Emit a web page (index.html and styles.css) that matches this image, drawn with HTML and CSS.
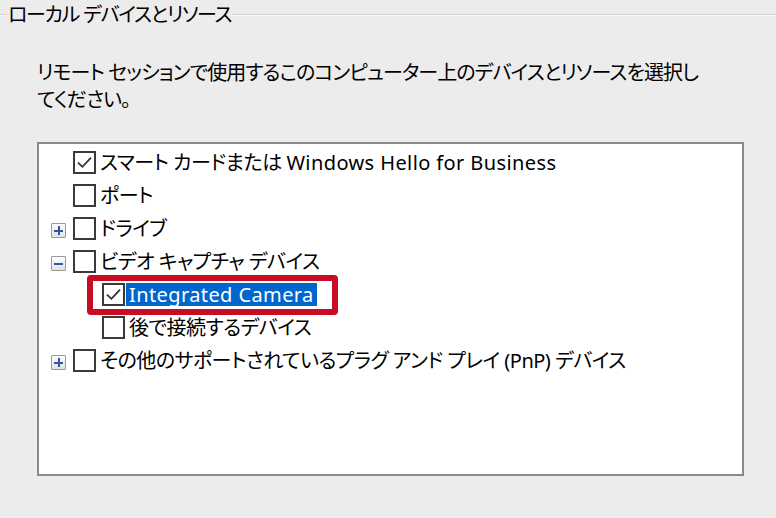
FILE: index.html
```html
<!DOCTYPE html>
<html lang="ja">
<head>
<meta charset="utf-8">
<title>ローカル デバイスとリソース</title>
<link rel="stylesheet" href="styles.css">
</head>
<body>
<div class="group-head">
  <span class="rule rule-start"></span>
  <span class="group-title">ローカル デバイスとリソース</span>
  <span class="rule rule-fill"></span>
</div>
<p class="desc">リモート セッションで使用するこのコンピューター上のデバイスとリソースを選択し<br>てください。</p>
<div class="tree">
  <div class="row">
    <span class="exp exp-none"></span>
    <span class="cb"><svg viewBox="0 0 19 19" width="19" height="19"><path d="M3 9.6 L7.4 13.8 L16 4.6" fill="none" stroke="#333" stroke-width="1.8"/></svg></span>
    <span class="label">スマート カードまたは <span class="latin">Windows Hello for Business</span></span>
  </div>
  <div class="row">
    <span class="exp exp-none"></span>
    <span class="cb"></span>
    <span class="label">ポート</span>
  </div>
  <div class="row">
    <span class="exp"><span class="bar-h"></span><span class="bar-v"></span></span>
    <span class="cb"></span>
    <span class="label">ドライブ</span>
  </div>
  <div class="row">
    <span class="exp"><span class="bar-h"></span></span>
    <span class="cb"></span>
    <span class="label">ビデオ キャプチャ デバイス</span>
  </div>
  <div class="row child marked">
    <span class="exp exp-none"></span>
    <span class="cb"><svg viewBox="0 0 19 19" width="19" height="19"><path d="M3 9.6 L7.4 13.8 L16 4.6" fill="none" stroke="#333" stroke-width="1.8"/></svg></span>
    <span class="label selected"><span class="latin">Integrated Camera</span></span>
    <span class="callout"></span>
  </div>
  <div class="row child">
    <span class="exp exp-none"></span>
    <span class="cb"></span>
    <span class="label">後で接続するデバイス</span>
  </div>
  <div class="row">
    <span class="exp"><span class="bar-h"></span><span class="bar-v"></span></span>
    <span class="cb"></span>
    <span class="label">その他のサポートされているプラグ アンド プレイ (PnP) デバイス</span>
  </div>
</div>
</body>
</html>
```
FILE: styles.css
```css
html, body {
  margin: 0;
  padding: 0;
  background: #ececec;
}
body {
  width: 776px;
  height: 518px;
  overflow: hidden;
  font-family: "Noto Sans", "Noto Sans CJK JP", sans-serif;
  font-size: 20px;
  color: #000;
  font-feature-settings: "palt";
}
.group-head {
  display: flex;
  align-items: center;
  height: 30px;
}
.rule {
  height: 0;
  border-top: 1px solid #d2d2d2;
  border-bottom: 1px solid #fbfbfb;
}
.rule-start {
  width: 6px;
  margin-right: 2px;
}
.rule-fill {
  flex: 1;
  margin-left: 2px;
}
.group-title {
  line-height: 30px;
  white-space: nowrap;
  letter-spacing: -1.3px;
}
.desc {
  margin: 29px 0 0 37px;
  line-height: 27px;
  white-space: nowrap;
  letter-spacing: -0.9px;
}
.tree {
  box-sizing: border-box;
  margin: 29px 0 0 37px;
  width: 707px;
  height: 334px;
  border: 2px solid #868a92;
  background: #fff;
  padding-top: 2px;
}
.row {
  position: relative;
  height: 33px;
  display: flex;
  align-items: center;
  padding-left: 12px;
}
.row.child {
  padding-left: 41px;
}
.exp {
  position: relative;
  box-sizing: border-box;
  width: 15px;
  height: 15px;
  margin-right: 7px;
  margin-top: 4px;
  border: 1px solid #9a9a9a;
  border-radius: 1px;
  background: linear-gradient(#fdfdfd, #e2e2e2);
}
.exp-none {
  border: none;
  background: none;
}
.bar-h {
  position: absolute;
  left: 2px;
  top: 5.5px;
  width: 9px;
  height: 2px;
  background: #2f55a8;
}
.bar-v {
  position: absolute;
  left: 5.5px;
  top: 2px;
  width: 2px;
  height: 9px;
  background: #2f55a8;
}
.cb {
  box-sizing: border-box;
  width: 23px;
  height: 23px;
  border: 2px solid #3a3a3a;
  background: #fff;
  display: flex;
  align-items: center;
  justify-content: center;
}
.label {
  margin-left: 1px;
  padding: 0 3px;
  line-height: 23px;
  white-space: nowrap;
  letter-spacing: -0.5px;
}
.latin {
  letter-spacing: 0.4px;
}
.label.selected {
  background: #0066cc;
  color: #fff;
  padding-right: 3px;
}
.callout {
  position: absolute;
  left: 48px;
  top: -3px;
  width: 251px;
  height: 40px;
  box-sizing: border-box;
  border: 6px solid #c80c24;
  border-radius: 4px;
}
```
